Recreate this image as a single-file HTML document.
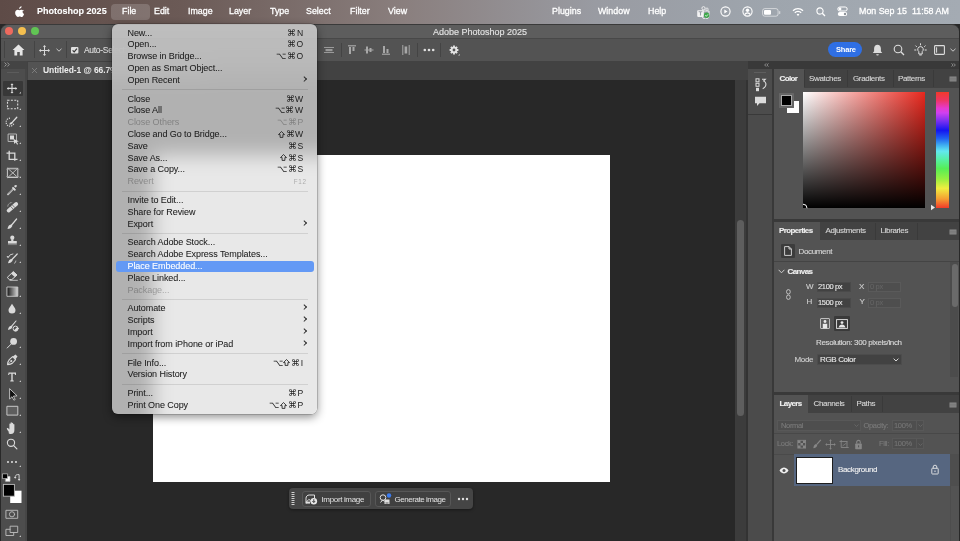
<!DOCTYPE html>
<html><head><meta charset="utf-8">
<style>
*{box-sizing:border-box;margin:0;padding:0}
html,body{width:960px;height:541px;overflow:hidden;background:#282828;font-family:"Liberation Sans",sans-serif;position:relative}
body{will-change:transform}
div,span,svg{position:absolute}
#menubar{left:0;top:0;width:960px;height:24px;background:linear-gradient(90deg,#5e4b47 0%,#6b5a56 19%,#8a7f7e 42%,#999ba2 62%,#9ea5ad 80%,#a4abb3 100%);color:#fff;font-size:10px}
#menubar span{top:6px;line-height:11px;font-size:9.2px;white-space:nowrap;transform-origin:0 0;transform:scaleX(.965);-webkit-text-stroke:.3px #fff}
#win{left:1px;top:24px;width:958px;height:517px;background:#282828;border-radius:7px 7px 0 0;overflow:hidden}
.pt{font-size:8px;letter-spacing:-.35px;color:#d6d6d6;white-space:nowrap;line-height:10px;-webkit-text-stroke:.12px currentColor}
.ptb{font-weight:bold;color:#efefef;letter-spacing:-.6px}
.tl{top:3px;width:8px;height:8px;border-radius:50%}
#menu{left:111.5px;top:24px;width:205.5px;height:390px;border-radius:6px;overflow:hidden;box-shadow:0 3px 10px rgba(0,0,0,.45),0 0 0 .5px rgba(0,0,0,.3)}
.mi{left:16px;font-size:9px;letter-spacing:-.07px;color:#202020;-webkit-text-stroke:.05px #202020;line-height:11.8px;white-space:nowrap}
.sc{right:13.2px;font-size:8.6px;color:#1c1c1c;line-height:11.8px;white-space:nowrap;letter-spacing:.6px}
.f12{font-size:6.3px;right:10.5px;line-height:12.5px}
.dis{color:rgba(0,0,0,.28);-webkit-text-stroke:0}
.sel{color:#fff;-webkit-text-stroke:.1px #fff}
.hl{left:4px;right:3px;height:11.6px;background:#6399f5;border-radius:3px}
.sep{left:10px;right:9px;height:1px;background:rgba(0,0,0,.1)}
.arr{right:11px;width:4.4px;height:4.4px;border-right:1.4px solid #2a2a2a;border-top:1.4px solid #2a2a2a;transform:translateY(2.1px) rotate(45deg)}
.ico{stroke:#d0d0d0;fill:none;stroke-width:1.2}
</style></head><body>
<div id="menubar">
 <svg style="left:15px;top:6px" width="9.6" height="11" viewBox="0 0 11 13"><path fill="#fff" d="M7.6 0.2c.1.9-.3 1.7-.8 2.3-.5.6-1.3 1-2 .9-.1-.8.3-1.7.8-2.2.5-.6 1.3-1 2-1zM10.2 4.4c-.1.1-1.4.8-1.4 2.5 0 2 1.7 2.6 1.8 2.6 0 .1-.3 1-.9 1.9-.6.8-1.2 1.6-2.1 1.6-.9 0-1.2-.6-2.2-.6-1.1 0-1.4.6-2.2.6-.9 0-1.5-.8-2.1-1.7C.3 10.2-.3 8.5.2 6.9.5 5.7 1.5 4.5 2.9 4.5c.9 0 1.6.6 2.2.6.5 0 1.3-.7 2.3-.6.4 0 1.7.1 2.8 1.4z"/></svg>
 <span style="left:37px;font-weight:bold;font-size:9.6px;top:5.2px;transform:scaleX(.94);-webkit-text-stroke:.1px #fff">Photoshop 2025</span>
 <div style="left:111px;top:4px;width:39px;height:15.5px;border-radius:4px;background:rgba(255,255,255,.17)"></div>
 <span style="left:122px">File</span>
 <span style="left:154px">Edit</span>
 <span style="left:187.5px">Image</span>
 <span style="left:229px">Layer</span>
 <span style="left:269.5px">Type</span>
 <span style="left:306px">Select</span>
 <span style="left:349.5px">Filter</span>
 <span style="left:387.5px">View</span>
 <span style="left:551.5px">Plugins</span>
 <span style="left:598px">Window</span>
 <span style="left:647.5px">Help</span>
 <span style="left:858.5px">Mon Sep 15</span>
 <span style="left:911.5px">11:58 AM</span>
 <svg style="left:696px;top:6px" width="15" height="13" viewBox="0 0 15 13"><circle cx="7.5" cy="2.2" r="1.6" fill="none" stroke="#f2f2f2" stroke-width=".9"/><circle cx="11" cy="3.2" r="1.2" fill="none" stroke="#f2f2f2" stroke-width=".8"/><path d="M6 5h7v4.5a3.5 3.5 0 0 1-7 0z" fill="none" stroke="#f2f2f2" stroke-width=".9"/><rect x="1.2" y="4.3" width="6.6" height="6.6" rx=".8" fill="#f4f4f4"/><path d="M2.6 5.8h3.8M4.5 5.8v3.8" stroke="#9aa0a8" stroke-width="1.1"/><circle cx="10.6" cy="9.3" r="2.7" fill="#3ea84a"/><path d="M9.3 9.3l1 1 1.7-1.9" stroke="#fff" stroke-width=".8" fill="none"/></svg>
 <svg style="left:720px;top:6px" width="11" height="11" viewBox="0 0 11 11"><circle cx="5.5" cy="5.5" r="4.6" stroke="#fff" stroke-width="1.1" fill="none"/><path d="M4.3 3.5 L7.5 5.5 L4.3 7.5Z" fill="#fff"/></svg>
 <svg style="left:742px;top:6px" width="11" height="11" viewBox="0 0 11 11"><circle cx="5.5" cy="5.5" r="4.6" stroke="#fff" stroke-width="1.1" fill="none"/><circle cx="5.5" cy="4.3" r="1.7" fill="#fff"/><path d="M2.6 8.6c.8-1.3 1.8-1.8 2.9-1.8s2.1.5 2.9 1.8" stroke="#fff" stroke-width="1.2" fill="none"/></svg>
 <svg style="left:762px;top:8px" width="19" height="9" viewBox="0 0 19 9"><rect x=".6" y=".6" width="15.5" height="7.6" rx="2.2" stroke="rgba(255,255,255,.55)" stroke-width="1" fill="none"/><rect x="2" y="2" width="7" height="4.8" rx="1" fill="#fff"/><rect x="17" y="3" width="1.3" height="3" rx=".6" fill="rgba(255,255,255,.5)"/></svg>
 <svg style="left:792px;top:7px" width="12" height="10" viewBox="0 0 12 10"><path d="M1 3.8A7 7 0 0 1 11 3.8" stroke="#fff" stroke-width="1.3" fill="none"/><path d="M2.8 5.7A4.4 4.4 0 0 1 9.2 5.7" stroke="#fff" stroke-width="1.3" fill="none"/><path d="M4.6 7.6A1.9 1.9 0 0 1 7.4 7.6L6 9Z" fill="#fff"/></svg>
 <svg style="left:816px;top:7px" width="10" height="10" viewBox="0 0 10 10"><circle cx="4" cy="4" r="3.1" stroke="#fff" stroke-width="1.1" fill="none"/><path d="M6.3 6.3L9 9" stroke="#fff" stroke-width="1.3"/></svg>
 <svg style="left:837px;top:6px" width="11" height="11" viewBox="0 0 11 11"><rect x=".8" y="1" width="9.4" height="4" rx="2" stroke="#fff" stroke-width="1" fill="none"/><circle cx="3" cy="3" r="1.4" fill="#fff"/><rect x=".8" y="6" width="9.4" height="4" rx="2" fill="#fff"/><circle cx="8" cy="8" r="1.2" fill="#8e9399"/></svg>
</div>
<div id="win"></div>
<div style="left:1px;top:23.5px;width:958px;height:14.5px;background:#5d5d5d;border-radius:7px 7px 0 0;border-top:.5px solid #3a3a3a"></div>
<div class="tl" style="left:5px;top:27px;background:#ed6a5e"></div>
<div class="tl" style="left:18px;top:27px;background:#f4bf4f"></div>
<div class="tl" style="left:31px;top:27px;background:#61c554"></div>
<div style="left:433px;top:27px;font-size:9px;line-height:11px;color:#e2e2e2;white-space:nowrap;-webkit-text-stroke:.15px #e2e2e2">Adobe Photoshop 2025</div>
<!-- options bar -->
<div style="left:1px;top:38px;width:958px;height:23px;background:#535353;border-top:1px solid #484848"></div>
<div style="left:4px;top:41px;width:1px;height:17px;background:#444"></div>
<div style="left:34px;top:41px;width:1px;height:17px;background:#444"></div>
<div style="left:66px;top:41px;width:1px;height:17px;background:#444"></div>
<svg style="left:12px;top:44px" width="13" height="12" viewBox="0 0 13 12"><path d="M6.5 .6 L12.4 6 L10.6 6 L10.6 11.4 L7.8 11.4 L7.8 8 L5.2 8 L5.2 11.4 L2.4 11.4 L2.4 6 L.6 6Z" fill="#e6e6e6"/></svg>
<svg style="left:39px;top:45px" width="11" height="11" viewBox="0 0 11 11"><path d="M5.5 1.3v8.4M1.3 5.5h8.4" stroke="#d8d8d8" stroke-width="1"/><path d="M5.5 .2l-1.5 1.6h3zM5.5 10.8l-1.5-1.6h3zM.2 5.5l1.6-1.5v3zM10.8 5.5l-1.6-1.5v3z" fill="#d8d8d8"/><circle cx="5.5" cy="1.4" r=".9" fill="#d8d8d8"/><circle cx="5.5" cy="9.6" r=".9" fill="#d8d8d8"/><circle cx="1.4" cy="5.5" r=".9" fill="#d8d8d8"/><circle cx="9.6" cy="5.5" r=".9" fill="#d8d8d8"/></svg>
<svg style="left:56px;top:48px" width="6" height="4" viewBox="0 0 6 4"><path d="M.5 .8L3 3.2 5.5 .8" stroke="#c8c8c8" stroke-width="1" fill="none"/></svg>
<svg style="left:71px;top:47px" width="8" height="7" viewBox="0 0 8 7"><rect x="0" y="0" width="7.4" height="6.6" rx="1" fill="#e0e0e0"/><path d="M1.6 3.3L3.2 4.9 5.9 1.7" stroke="#333" stroke-width="1.2" fill="none"/></svg>
<div class="pt" style="left:84px;top:44.5px;color:#dcdcdc;font-size:8.5px;letter-spacing:-.3px">Auto-Select:</div>
<!-- alignment icons right of menu -->
<svg style="left:323px;top:46px" width="12" height="8" viewBox="0 0 12 8"><path d="M1 1.5h10M1 6.5h10" stroke="#9a9a9a" stroke-width="1.2"/><rect x="2.5" y="3" width="7" height="2.2" fill="#9a9a9a"/></svg>
<div style="left:341px;top:43px;width:1px;height:14px;background:#444"></div>
<svg style="left:347px;top:45px" width="10" height="10" viewBox="0 0 10 10"><path d="M1 .8h8" stroke="#a8a8a8" stroke-width="1.2"/><rect x="2" y="2" width="2" height="7" fill="#a8a8a8"/><rect x="5.5" y="2" width="2" height="4" fill="#a8a8a8"/></svg>
<svg style="left:364px;top:45px" width="10" height="10" viewBox="0 0 10 10"><path d="M.5 5h9" stroke="#a8a8a8" stroke-width="1"/><rect x="2" y="1.5" width="2" height="7" fill="#a8a8a8"/><rect x="5.5" y="3" width="2" height="4" fill="#a8a8a8"/></svg>
<svg style="left:381px;top:45px" width="10" height="10" viewBox="0 0 10 10"><path d="M1 9.2h8" stroke="#a8a8a8" stroke-width="1.2"/><rect x="2" y="1" width="2" height="7" fill="#a8a8a8"/><rect x="5.5" y="4" width="2" height="4" fill="#a8a8a8"/></svg>
<svg style="left:401.5px;top:44px" width="8" height="12" viewBox="0 0 8 12"><path d="M.8 1v10M7.2 1v10" stroke="#a8a8a8" stroke-width="1"/><rect x="2.6" y="2.5" width="2.6" height="7" fill="#a8a8a8"/></svg>
<div style="left:417px;top:43px;width:1px;height:14px;background:#444"></div>
<svg style="left:423px;top:48px" width="12" height="4" viewBox="0 0 12 4"><circle cx="1.8" cy="2" r="1.3" fill="#e0e0e0"/><circle cx="6" cy="2" r="1.3" fill="#e0e0e0"/><circle cx="10.2" cy="2" r="1.3" fill="#e0e0e0"/></svg>
<div style="left:440px;top:43px;width:1px;height:14px;background:#444"></div>
<svg style="left:448.2px;top:43.8px" width="14" height="14" viewBox="0 0 14 14"><path d="M9.28 5.09L10.40 5.04L10.40 6.96L9.28 6.91L9.14 7.30L8.96 7.68L9.79 8.43L8.43 9.79L7.68 8.96L7.30 9.14L6.91 9.28L6.96 10.40L5.04 10.40L5.09 9.28L4.70 9.14L4.32 8.96L3.57 9.79L2.21 8.43L3.04 7.68L2.86 7.30L2.72 6.91L1.60 6.96L1.60 5.04L2.72 5.09L2.86 4.70L3.04 4.32L2.21 3.57L3.57 2.21L4.32 3.04L4.70 2.86L5.09 2.72L5.04 1.60L6.96 1.60L6.91 2.72L7.30 2.86L7.68 3.04L8.43 2.21L9.79 3.57L8.96 4.32L9.14 4.70Z M7.4 6a1.4 1.4 0 1 0 -2.8 0a1.4 1.4 0 1 0 2.8 0Z" fill="#e2e2e2" fill-rule="evenodd"/><path d="M10 11.6h1.8v-1.6z" fill="#cfcfcf"/></svg>
<!-- right of options bar -->
<div style="left:828px;top:42px;width:34px;height:15px;border-radius:8px;background:#2f6fe4"></div>
<div style="left:836px;top:45px;font-size:7.5px;font-weight:bold;color:#fff;line-height:9px;letter-spacing:-.2px">Share</div>
<svg style="left:872px;top:44px" width="11" height="12" viewBox="0 0 11 12"><path d="M5.5 .8c-2 0-3.4 1.5-3.4 3.6v2.8L.8 9h9.4L8.9 7.2V4.4C8.9 2.3 7.5.8 5.5.8z" fill="#dcdcdc"/><path d="M4.2 10.2a1.3 1.3 0 0 0 2.6 0z" fill="#dcdcdc"/></svg>
<svg style="left:893px;top:44px" width="12" height="12" viewBox="0 0 12 12"><circle cx="5" cy="5" r="3.8" stroke="#dedede" stroke-width="1.1" fill="none"/><path d="M7.8 7.8l3.2 3.2" stroke="#dedede" stroke-width="1.3"/></svg>
<svg style="left:914px;top:43px" width="13" height="13" viewBox="0 0 13 13"><path d="M6.5 .3v2M1.5 2.6l1.3 1.3M11.5 2.6l-1.3 1.3M.3 7h2M10.7 7h2" stroke="#dedede" stroke-width="1"/><path d="M6.5 3.6a2.8 2.8 0 0 0-1.7 5v2.4h3.4V8.6a2.8 2.8 0 0 0-1.7-5z" stroke="#dedede" stroke-width="1" fill="none"/><path d="M5 11.5h3l-.5 1h-2z" fill="#dedede"/></svg>
<svg style="left:934px;top:45px" width="11" height="10" viewBox="0 0 11 10"><rect x=".6" y=".6" width="9.8" height="8.8" rx=".8" stroke="#dedede" stroke-width="1.1" fill="none"/><path d="M2.6 2.3v5.4" stroke="#dedede" stroke-width="1"/></svg>
<svg style="left:950px;top:48px" width="6" height="4" viewBox="0 0 6 4"><path d="M.5 .8L3 3.2 5.5 .8" stroke="#c8c8c8" stroke-width="1" fill="none"/></svg>
<!-- tab row -->
<div style="left:1px;top:61px;width:747px;height:19px;background:#424242"></div>
<div style="left:28px;top:62px;width:180px;height:18px;background:#535353"></div>
<svg style="left:31px;top:67px" width="7" height="7" viewBox="0 0 7 7"><path d="M1 1l5 5M6 1L1 6" stroke="#8c8c8c" stroke-width=".7"/></svg>
<div style="left:43px;top:65px;font-size:8.5px;font-weight:bold;color:#ececec;line-height:10px;white-space:nowrap;letter-spacing:-.1px">Untitled-1 @ 66.7% (RGB/8)</div>
<!-- tools panel -->
<div style="left:1px;top:61px;width:26.2px;height:480px;background:#464646"></div>
<div style="left:1px;top:61px;width:26.2px;height:8px;background:#444"></div><div style="left:1px;top:69px;width:24.1px;height:472px;background:#4d4d4d"></div>
<svg style="left:4px;top:62px" width="6" height="5" viewBox="0 0 6 5"><path d="M.6 .5L2.4 2.5.6 4.5M3.4 .5L5.2 2.5 3.4 4.5" stroke="#aaa" stroke-width=".8" fill="none"/></svg>
<div style="left:7px;top:72px;width:12px;height:1.2px;background:#5c5c5c"></div>
<div style="left:3px;top:80.5px;width:19.5px;height:15px;background:#383838;border-radius:1px"></div>
<svg style="left:0;top:0" width="27" height="541" viewBox="0 0 27 541">
<defs><linearGradient id="tg" x1="0" x2="1"><stop offset="0" stop-color="#1a1a1a"/><stop offset="1" stop-color="#d8d8d8"/></linearGradient></defs>
<g fill="#dadada" stroke="#dadada" stroke-linecap="round">
<path d="M12 84.5v8M8 88.4h8" stroke-width="1.1" fill="none"/><path d="M12 83.2l-1.5 1.7h3zM12 93.6l-1.5-1.7h3zM6.8 88.4l1.7-1.5v3zM17.2 88.4l-1.7-1.5v3z" stroke="none"/>
<path d="M7.5 100.2h10.2v8.6H7.5z" fill="none" stroke-width="1.1" stroke-dasharray="2 1.4" stroke-linecap="butt"/>
<path d="M10 118.2a4 4 0 1 0 4 5" fill="none" stroke-width="1.2" stroke-dasharray="1.2 1" stroke-linecap="butt"/><path d="M16.8 117.2l-4.6 5.2" stroke-width="1.3"/><path d="M12.4 122c-1.6-.2-2.8.8-3.1 2.6 1.7.1 2.8-.5 3.4-1.7z" stroke="none"/>
<path d="M8.5 134h8v7.5h-8z" fill="none" stroke-width=".9" stroke="#bdbdbd"/><path d="M10 135.5h4v4h-4z" stroke="none"/><path d="M13.6 139l5.2 2.2-2.1.7 1.4 2.2-1 .6-1.3-2.2-1.6 1.5z" stroke="none"/>
<path d="M9.2 150.8v8.6h8.3M6.5 153.2h8.3v7.6" fill="none" stroke-width="1.3" stroke-linecap="butt"/>
<path d="M7.8 168.3h10v9.2h-10z" fill="none" stroke-width="1" stroke="#c8c8c8"/><path d="M7.8 168.3l10 9.2M17.8 168.3l-10 9.2" stroke-width=".9" stroke="#c8c8c8"/><path d="M6.5 169.3h12.5M6.5 176.5h12.5" stroke-width=".6" stroke="#9a9a9a"/>
<path d="M8 194.3l5.8-5.8" stroke-width="1.7"/><path d="M8.6 193.7l5-5" stroke="#4d4d4d" stroke-width=".6"/><path d="M13 186.8l3 3-1.2 1.2-3-3z" stroke="none"/><path d="M14.6 185.2l1.7-.3.5.5-.3 1.7-1.3.4-1-1z" stroke="none"/>
<path d="M8.6 210.6l7.6-6.6" stroke-width="3.8"/><path d="M10.6 206.4l2.3 2.4M12.4 205l2.3 2.4" stroke="#4d4d4d" stroke-width=".7"/><path d="M7.8 206.4a4 4 0 0 1 4.3-3.8" fill="none" stroke-width=".9" stroke-dasharray="1 .9" stroke-linecap="butt"/>
<path d="M16.6 219l-5 6" stroke-width="1.2"/><path d="M11.8 224.6c-2.3-.1-3.8 1.4-4.3 4.4 2.3-.1 3.9-1 4.8-3z" stroke="none"/>
<circle cx="12.3" cy="237.7" r="2.1" stroke="none"/><path d="M11.2 239.2h2.2v2h-2.2z" stroke="none"/><path d="M8 241h8.8v2.6H8z" stroke="none"/><path d="M8.3 244.6h8.2" stroke-width=".7" stroke="#9a9a9a"/>
<path d="M17.2 254l-5.3 5.5" stroke-width="1.2"/><path d="M12.2 259c-2.3-.1-3.7 1.4-4.2 4.3 2.3-.1 3.8-1 4.7-3z" stroke="none"/><path d="M8.3 257.3a5 5 0 0 1 4.6-3.4" fill="none" stroke-width=".9"/><path d="M6.5 256l2.3.3-.8 2z" stroke="none"/><path d="M15.8 261a4 4 0 0 1-1.4 2.4" fill="none" stroke-width=".8" stroke-dasharray="1 .8"/>
<path d="M7.5 277.2l5.8-5.6 3.7 3.4-5.2 4.6H9.8z" fill="none" stroke-width="1"/><path d="M13.3 271.6l3.7 3.4-2.2 2.1-3.7-3.4z" stroke="none"/><path d="M10 280.3h7.4" stroke-width=".8"/>
<path d="M7.3 287h10.5v9.3H7.3z" fill="url(#tg)" stroke-width=".9" stroke="#c8c8c8"/>
<path d="M12 303.8c-1 2-3.5 4.4-3.5 6.3a3.5 3.5 0 0 0 7 0c0-1.9-2.5-4.3-3.5-6.3z" stroke="none"/>
<path d="M16 321l-4.3 5.2" stroke-width="1.1"/><path d="M11.9 325.8c-2.2-.1-3.5 1.3-3.9 4.1 2.2-.1 3.6-.9 4.4-2.8z" stroke="none"/><circle cx="15.6" cy="328.6" r="2.5" fill="none" stroke-width="1"/><path d="M13.8 330.4l3.6-3.6A2.5 2.5 0 0 1 13.8 330.4z" stroke="none"/>
<circle cx="13.6" cy="341.4" r="3.4" stroke="none"/><path d="M11.2 344l-4 4" stroke-width="1"/>
<path d="M7.6 364.6c.1-2 .6-3.6 1.7-4.9l3.3-3 3 3-3 3.3c-1.3 1.1-2.9 1.6-5 1.6z" fill="none" stroke-width="1.1" stroke-linejoin="round"/><circle cx="11.3" cy="360.9" r="1" stroke="none"/><path d="M7.8 364.4l3-3" stroke-width=".7"/><path d="M12.8 356.4l2.7-1.9 2 2-1.9 2.7z" stroke="none"/>
<path d="M8.6 372.6h7.4v2.3h-.9l-.5-1.1h-1.9v6.4l1 .4v.9H10.3v-.9l1-.4v-6.4H9.5l-.5 1.1h-.9z" stroke="none"/>
<path d="M9.6 389v10l2.4-2.3 1.9 3.5 1.3-.7-1.8-3.4 3.3-.2z" fill="#111" stroke="#dadada" stroke-width=".8" stroke-linejoin="round"/>
<path d="M7.3 406.3h10.5v8.8H7.3z" fill="#5e5e5e" stroke-width="1" stroke="#c8c8c8"/>
<path d="M9.3 432.5c-1-1.4-2.1-2.8-2.4-3.6-.3-.8.6-1.3 1.3-.6l1.2 1.3v-5.6c0-.8 1.2-.8 1.2 0v3.8-5c0-.8 1.3-.8 1.3 0v4.9-4.3c0-.8 1.3-.8 1.3 0v4.4-3.2c0-.8 1.2-.8 1.2 0v5.5c0 2.5-1.2 4-3.5 4-1.2 0-2-.7-2.6-1.6z" stroke="none"/>
<circle cx="11" cy="442.8" r="3.6" fill="none" stroke-width="1.1"/><path d="M13.7 445.6l3.2 3.3" stroke-width="1.2"/>
<circle cx="8" cy="462" r="1.05" stroke="none"/><circle cx="12" cy="462" r="1.05" stroke="none"/><circle cx="16" cy="462" r="1.05" stroke="none"/>
<path d="M5.8 476.5h4.2v4.8H5.8z" fill="#fff" stroke="#c8c8c8" stroke-width=".7"/><path d="M2.8 473.8h4.8v4.8H2.8z" fill="#000" stroke="#c8c8c8" stroke-width=".7"/>
<path d="M15.2 477.3c0-1.8.9-2.7 2.6-2.7h1.3v4.3" fill="none" stroke-width=".9"/><path d="M13.9 477l1.3 1.8 1.3-1.8zM17.8 479l1.3 1.9 1.3-1.9z" stroke="none"/>
<path d="M6.3 510.3h11.4v8H6.3z" fill="none" stroke-width=".9" stroke="#c0c0c0"/><circle cx="12" cy="514.3" r="2.6" fill="none" stroke-width=".9" stroke="#c0c0c0"/>
<path d="M6.3 529.3h7.4v6.2H6.3z" fill="none" stroke-width=".9" stroke="#c0c0c0"/><path d="M10.5 526.2h7.2v6.3h-7.2z" fill="#4d4d4d" stroke-width=".9" stroke="#c0c0c0"/>
</g>
<g fill="#c8c8c8"><path d="M21 91.7v1.8h-1.8z"/><path d="M21 108.2v1.8h-1.8z"/><path d="M21 125.2v1.8h-1.8z"/><path d="M21 142.2v1.8h-1.8z"/><path d="M21 159.2v1.8h-1.8z"/><path d="M21 176.2v1.8h-1.8z"/><path d="M21 193.2v1.8h-1.8z"/><path d="M21 210.2v1.8h-1.8z"/><path d="M21 227.2v1.8h-1.8z"/><path d="M21 244.2v1.8h-1.8z"/><path d="M21 261.2v1.8h-1.8z"/><path d="M21 278.2v1.8h-1.8z"/><path d="M21 295.2v1.8h-1.8z"/><path d="M21 312.2v1.8h-1.8z"/><path d="M21 346.2v1.8h-1.8z"/><path d="M21 363.2v1.8h-1.8z"/><path d="M21 380.2v1.8h-1.8z"/><path d="M21 397.2v1.8h-1.8z"/><path d="M21 414.2v1.8h-1.8z"/><path d="M21 431.2v1.8h-1.8z"/><path d="M21 465.2v1.8h-1.8z"/><path d="M21 535.2v1.8h-1.8z"/></g>
<rect x="10.2" y="490.7" width="11.3" height="12.3" fill="#fff"/>
<rect x="3.4" y="484.4" width="11" height="11.8" fill="#000" stroke="#bdbdbd" stroke-width=".9"/>
</svg>
<!-- doc -->
<div style="left:153px;top:155px;width:457px;height:327px;background:#fff"></div>
<!-- contextual taskbar -->
<div style="left:289px;top:488px;width:184px;height:21px;background:#454545;border-radius:4px;box-shadow:0 1px 3px rgba(0,0,0,.4)"></div>
<svg style="left:291px;top:491px" width="4" height="15" viewBox="0 0 4 15"><g stroke="#cfcfcf" stroke-width="1"><path d="M.5 1.5h3M.5 3.5h3M.5 5.5h3M.5 7.5h3M.5 9.5h3M.5 11.5h3M.5 13.5h3"/></g></svg>
<div style="left:302px;top:491px;width:69px;height:16px;border:1px solid #575757;border-radius:3px;background:#404040"></div>
<svg style="left:305px;top:493.5px" width="13" height="11" viewBox="0 0 13 11"><path d="M1 9.5V4.2C1 2.4 2.4 1 4.2 1h5.3v3" fill="none" stroke="#e0e0e0" stroke-width="1"/><path d="M1.3 8.2l2.6-2.9 2 1.8 1.6-1.5" fill="none" stroke="#e0e0e0" stroke-width="1"/><rect x="1" y="7.6" width="4" height="2" fill="#e0e0e0"/><circle cx="8.8" cy="7.2" r="3.3" fill="#e8e8e8"/><path d="M8.8 5.2v3.2M7.4 7l1.4 1.5L10.2 7" stroke="#404040" stroke-width="1" fill="none"/></svg>
<div class="pt" style="left:321.5px;top:494.8px;color:#e2e2e2;letter-spacing:-.35px;-webkit-text-stroke:0">Import image</div>
<div style="left:375px;top:491px;width:76px;height:16px;border:1px solid #575757;border-radius:3px;background:#404040"></div>
<svg style="left:378.5px;top:493px" width="13" height="12" viewBox="0 0 13 12"><circle cx="4" cy="4.6" r="2.8" fill="none" stroke="#e0e0e0" stroke-width="1"/><path d="M1.5 9.5l2.2-2.6 1.8 1.6" fill="none" stroke="#e0e0e0" stroke-width="1"/><rect x="5.5" y="6.5" width="5" height="4.5" fill="#e0e0e0"/><path d="M6.5 10h3" stroke="#404040" stroke-width=".8"/><circle cx="10" cy="2.5" r="2.2" fill="#3b7cf0"/></svg>
<div class="pt" style="left:394.5px;top:494.8px;color:#e2e2e2;letter-spacing:-.45px;-webkit-text-stroke:0">Generate image</div>
<svg style="left:457px;top:497px" width="12" height="4" viewBox="0 0 12 4"><circle cx="2" cy="2" r="1.2" fill="#e0e0e0"/><circle cx="6" cy="2" r="1.2" fill="#e0e0e0"/><circle cx="10" cy="2" r="1.2" fill="#e0e0e0"/></svg>
<!-- scrollbar column -->
<div style="left:735px;top:80px;width:11px;height:461px;background:#3c3c3c"></div>
<div style="left:737px;top:220px;width:7px;height:196px;border-radius:3.5px;background:#5e5e5e"></div>
<div style="left:746.3px;top:80px;width:1.5px;height:461px;background:#333"></div>
<!-- right dock top strip -->
<div style="left:748px;top:61px;width:211px;height:8px;background:#393939"></div>
<svg style="left:764px;top:62.5px" width="5" height="4" viewBox="0 0 5 4"><path d="M2.2 .4L.7 2l1.5 1.6M4.4 .4L2.9 2l1.5 1.6" stroke="#b0b0b0" stroke-width=".7" fill="none"/></svg>
<svg style="left:951px;top:62.5px" width="5" height="4" viewBox="0 0 5 4"><path d="M.6 .4L2.1 2 .6 3.6M2.8 .4L4.3 2 2.8 3.6" stroke="#b0b0b0" stroke-width=".7" fill="none"/></svg>
<!-- icon column -->
<div style="left:748px;top:69px;width:25px;height:472px;background:#393939"></div>
<div style="left:747.8px;top:69px;width:24.7px;height:44.5px;background:#4c4c4c"></div>
<div style="left:747.8px;top:114.5px;width:24.7px;height:427px;background:#4b4b4b"></div>
<div style="left:754px;top:72px;width:12px;height:1.2px;background:#5e5e5e"></div>
<svg style="left:754.5px;top:77.5px" width="13" height="14" viewBox="0 0 13 14"><g fill="none" stroke="#dcdcdc" stroke-width="1"><rect x="1" y=".8" width="3" height="3"/><rect x="1" y="5.3" width="3" height="3"/></g><rect x="1" y="9.8" width="3" height="3.4" fill="#dcdcdc"/><path d="M7 1.3h3.3l-1.6 1.6c2.3 1 2.8 3.8 1.6 5.6-.6 1-1.8 1.8-2.6 2.2" stroke="#dcdcdc" stroke-width="1.1" fill="none"/></svg>
<svg style="left:754px;top:96px" width="13" height="11" viewBox="0 0 13 11"><path d="M1 .8h11v6.4H5.5L3 10V7.2H1z" fill="#dcdcdc"/></svg>
<!-- right panels background -->
<div style="left:772.5px;top:69px;width:186.5px;height:472px;background:#393939"></div>
<!-- COLOR panel -->
<div style="left:774px;top:69px;width:185px;height:18.5px;background:#424242"></div>
<div style="left:774px;top:87.5px;width:185px;height:131.5px;background:#535353"></div>
<div style="left:774px;top:69px;width:30px;height:18.5px;background:#535353"></div>
<div style="left:804px;top:70px;width:1px;height:17px;background:#3a3a3a"></div>
<div style="left:847px;top:70px;width:1px;height:17px;background:#3a3a3a"></div>
<div style="left:892.5px;top:70px;width:1px;height:17px;background:#3a3a3a"></div>
<div style="left:932.5px;top:70px;width:1px;height:17px;background:#3a3a3a"></div>
<div class="pt ptb" style="left:779.5px;top:73.7px">Color</div>
<div class="pt" style="left:809px;top:73.7px">Swatches</div>
<div class="pt" style="left:853px;top:73.7px">Gradients</div>
<div class="pt" style="left:898px;top:73.7px">Patterns</div>
<svg style="left:948px;top:75px" width="9" height="7" viewBox="0 0 9 7"><rect x="1.5" y="1.5" width="7" height="5" fill="#8a8a8a"/><path d="M1.5 3.2h7M1.5 4.9h7" stroke="#6a6a6a" stroke-width=".6"/></svg>
<div style="left:786.8px;top:100.8px;width:12.2px;height:12.2px;background:#fff"></div>
<div style="left:779px;top:93px;width:14.7px;height:14.7px;background:#666;border-radius:.5px"></div><div style="left:780.8px;top:95px;width:11px;height:10.6px;background:#000;border:.7px solid #a8a8a8"></div>
<div style="left:803px;top:92px;width:122px;height:116px;background:linear-gradient(to bottom,rgba(0,0,0,0),#000),linear-gradient(to right,#fff,#e8281e)"></div>
<svg style="left:800px;top:203px" width="8" height="8" viewBox="0 0 8 8"><path d="M3 1.2a4 4 0 0 1 4 4" stroke="#fff" stroke-width="1" fill="none"/></svg>
<div style="left:936px;top:92px;width:13px;height:116px;background:linear-gradient(to bottom,#f23a2a 0%,#ee3562 7%,#e63ad0 14%,#d040f0 18%,#7a30f0 25%,#1414f0 33%,#2060f0 40%,#40b0f0 46%,#62e8f0 51%,#56f0a8 58%,#56ee56 66%,#98f040 75%,#f0ee40 83%,#f5a032 92%,#f23a2a 100%)"></div>
<svg style="left:930px;top:203.5px" width="6" height="7" viewBox="0 0 6 7"><path d="M1 .8L5 3.5 1 6.2z" fill="#e8e8e8"/></svg>
<!-- PROPERTIES panel -->
<div style="left:774px;top:222px;width:185px;height:18px;background:#424242"></div>
<div style="left:774px;top:240px;width:185px;height:152px;background:#535353"></div>
<div style="left:774px;top:222px;width:46px;height:18px;background:#535353"></div>
<div style="left:874.5px;top:223px;width:1px;height:17px;background:#3a3a3a"></div>
<div style="left:916.5px;top:223px;width:1px;height:17px;background:#3a3a3a"></div>
<div class="pt ptb" style="left:779px;top:225.5px">Properties</div>
<div class="pt" style="left:825.5px;top:225.5px">Adjustments</div>
<div class="pt" style="left:880.5px;top:225.5px">Libraries</div>
<svg style="left:948px;top:228px" width="9" height="7" viewBox="0 0 9 7"><rect x="1.5" y="1.5" width="7" height="5" fill="#8a8a8a"/><path d="M1.5 3.2h7M1.5 4.9h7" stroke="#6a6a6a" stroke-width=".6"/></svg>
<div style="left:781px;top:243.5px;width:14px;height:14px;background:#3c3c3c;border-radius:1px"></div>
<svg style="left:784px;top:245.5px" width="8" height="10" viewBox="0 0 8 10"><path d="M.6 .6h4.4l2.4 2.4v6.4H.6z M5 .6v2.4h2.4" stroke="#dcdcdc" stroke-width=".9" fill="none"/></svg>
<div class="pt" style="left:798.5px;top:246.5px">Document</div>
<div style="left:774px;top:261px;width:185px;height:1px;background:#444"></div>
<svg style="left:778px;top:269px" width="7" height="5" viewBox="0 0 7 5"><path d="M.6 .8L3.5 3.8 6.4 .8" stroke="#cfcfcf" stroke-width="1" fill="none"/></svg>
<div class="pt ptb" style="left:787.5px;top:267px">Canvas</div>
<div class="pt" style="left:806px;top:281.5px;color:#cfcfcf">W</div>
<div style="left:816.5px;top:282px;width:34px;height:10px;background:#424242;border:.5px solid #4a4a4a"></div>
<div class="pt" style="left:818px;top:282px;color:#e8e8e8;font-size:7.5px">2100 px</div>
<div class="pt" style="left:859px;top:281.5px;color:#cfcfcf">X</div>
<div style="left:867.5px;top:282px;width:33.5px;height:10px;background:#4e4e4e;border:.5px solid #5a5a5a"></div>
<div class="pt" style="left:870px;top:282px;color:#646464;font-size:7.5px">0 px</div>
<div class="pt" style="left:806.5px;top:297px;color:#cfcfcf">H</div>
<div style="left:816.5px;top:298px;width:34px;height:10px;background:#424242;border:.5px solid #4a4a4a"></div>
<div class="pt" style="left:818px;top:297.5px;color:#e8e8e8;font-size:7.5px">1500 px</div>
<div class="pt" style="left:859.5px;top:297px;color:#cfcfcf">Y</div>
<div style="left:867.5px;top:298px;width:33.5px;height:10px;background:#4e4e4e;border:.5px solid #5a5a5a"></div>
<div class="pt" style="left:870px;top:297.5px;color:#646464;font-size:7.5px">0 px</div>
<svg style="left:786px;top:289px" width="5" height="11" viewBox="0 0 5 11"><g fill="none" stroke="#cfcfcf" stroke-width=".9"><rect x=".6" y=".6" width="3.6" height="4.4" rx="1.8"/><rect x=".6" y="6" width="3.6" height="4.4" rx="1.8"/></g></svg>
<div style="left:819.5px;top:318px;width:10.5px;height:11px;border:.8px solid #bdbdbd;background:#5a5a5a;border-radius:1px"></div>
<svg style="left:821px;top:319px" width="8" height="10" viewBox="0 0 8 10"><circle cx="4" cy="2.5" r="1.4" fill="#e8e8e8"/><path d="M1.8 4.8h4.4v4.6H1.8z" fill="#e8e8e8"/></svg>
<div style="left:834px;top:316px;width:16px;height:15px;background:#3a3a3a;border-radius:1px"></div>
<svg style="left:836px;top:318.5px" width="12" height="10" viewBox="0 0 12 10"><rect x=".6" y=".6" width="10.8" height="8.8" fill="none" stroke="#e8e8e8" stroke-width=".9"/><circle cx="6" cy="3.6" r="1.4" fill="#e8e8e8"/><path d="M2.5 8.5c.6-2 1.8-3 3.5-3s2.9 1 3.5 3z" fill="#e8e8e8"/></svg>
<div class="pt" style="left:816px;top:337.5px;color:#dadada">Resolution: 300 pixels/inch</div>
<div class="pt" style="left:794.5px;top:354.5px;color:#cfcfcf">Mode</div>
<div style="left:816.5px;top:353.5px;width:85.5px;height:11.5px;background:#424242;border:.5px solid #4c4c4c;border-radius:1px"></div>
<div class="pt" style="left:820px;top:354.5px;color:#e8e8e8">RGB Color</div>
<svg style="left:893px;top:357.5px" width="6" height="4" viewBox="0 0 6 4"><path d="M.6 .6L3 3 5.4 .6" stroke="#d8d8d8" stroke-width="1" fill="none"/></svg>
<div style="left:950px;top:262px;width:8px;height:115px;background:#4c4c4c"></div>
<div style="left:951.5px;top:264px;width:6.5px;height:42.5px;border-radius:3px;background:#6a6a6a"></div>
<!-- LAYERS panel -->
<div style="left:774px;top:395px;width:185px;height:17.5px;background:#424242"></div>
<div style="left:774px;top:412.5px;width:185px;height:128.5px;background:#535353"></div>
<div style="left:774px;top:395px;width:34px;height:17.5px;background:#535353"></div>
<div style="left:850.5px;top:396px;width:1px;height:16px;background:#3a3a3a"></div>
<div style="left:881.5px;top:396px;width:1px;height:16px;background:#3a3a3a"></div>
<div class="pt ptb" style="left:779.5px;top:398.5px">Layers</div>
<div class="pt" style="left:813.5px;top:398.5px">Channels</div>
<div class="pt" style="left:856.5px;top:398.5px">Paths</div>
<svg style="left:948px;top:400.5px" width="9" height="7" viewBox="0 0 9 7"><rect x="1.5" y="1.5" width="7" height="5" fill="#8a8a8a"/><path d="M1.5 3.2h7M1.5 4.9h7" stroke="#6a6a6a" stroke-width=".6"/></svg>
<div style="left:777px;top:419.5px;width:84px;height:11px;background:#4e4e4e;border:.5px solid #585858"></div>
<div class="pt" style="left:781px;top:420.8px;color:#7a7a7a;font-size:7.5px">Normal</div>
<svg style="left:854px;top:424px" width="5" height="3" viewBox="0 0 5 3"><path d="M.5 .5L2.5 2.5 4.5 .5" stroke="#6a6a6a" stroke-width=".8" fill="none"/></svg>
<div class="pt" style="left:863.5px;top:420.8px;color:#7a7a7a;font-size:7.5px">Opacity:</div>
<div style="left:891.5px;top:419.5px;width:32.5px;height:11px;background:#4e4e4e;border:.5px solid #585858"></div>
<div style="left:915.5px;top:419.5px;width:1px;height:11px;background:#585858"></div>
<div class="pt" style="left:894px;top:420.8px;color:#757575;font-size:7.5px">100%</div>
<svg style="left:918px;top:424px" width="5" height="3" viewBox="0 0 5 3"><path d="M.5 .5L2.5 2.5 4.5 .5" stroke="#6a6a6a" stroke-width=".8" fill="none"/></svg>
<div style="left:774px;top:433px;width:185px;height:1px;background:#484848"></div>
<div class="pt" style="left:777px;top:439px;color:#7a7a7a;font-size:7.5px">Lock:</div>
<svg style="left:797px;top:438.5px" width="70" height="11" viewBox="0 0 70 11"><g fill="#878787" stroke="#878787">
<rect x=".8" y="1.3" width="7.8" height="7.8" fill="none" stroke-width=".8"/><rect x="1" y="1.5" width="2.5" height="2.5" stroke="none"/><rect x="6" y="1.5" width="2.5" height="2.5" stroke="none"/><rect x="3.5" y="4" width="2.5" height="2.5" stroke="none"/><rect x="1" y="6.5" width="2.5" height="2.5" stroke="none"/><rect x="6" y="6.5" width="2.5" height="2.5" stroke="none"/>
<path d="M23.8 .8l-4 4.6" stroke-width="1.2"/><path d="M19.6 5c-1.8 0-2.9 1.3-3.3 4.2 1.9-.2 3.2-.9 3.9-2.7z" stroke="none"/>
<path d="M33.5 1v9M29 5.5h9" stroke-width=".9" fill="none"/><path d="M33.5.3l-1.4 1.5h2.8zM33.5 10.7l-1.4-1.5h2.8zM28.3 5.5l1.5-1.4v2.8zM38.7 5.5l-1.5-1.4v2.8z" stroke="none"/>
<path d="M42.5 2.5h8M44.2 1v7.5h7.5M50 2.5v6" stroke-width=".9" fill="none"/><path d="M45.5 7l4-3" stroke-width=".7"/>
<rect x="58.2" y="4.6" width="6.6" height="5.6" rx=".6" stroke="none"/><path d="M59.7 4.6V3.2a1.8 1.8 0 0 1 3.6 0v1.4" fill="none" stroke-width="1.1"/><rect x="61.1" y="6.3" width="1" height="2" fill="#535353" stroke="none"/>
</g></svg>
<div class="pt" style="left:879px;top:439px;color:#7a7a7a;font-size:7.5px">Fill:</div>
<div style="left:891.5px;top:438px;width:32.5px;height:11px;background:#4e4e4e;border:.5px solid #585858"></div>
<div style="left:915.5px;top:438px;width:1px;height:11px;background:#585858"></div>
<div class="pt" style="left:894px;top:439.3px;color:#757575;font-size:7.5px">100%</div>
<svg style="left:918px;top:442.5px" width="5" height="3" viewBox="0 0 5 3"><path d="M.5 .5L2.5 2.5 4.5 .5" stroke="#6a6a6a" stroke-width=".8" fill="none"/></svg>
<div style="left:774px;top:453.5px;width:185px;height:1px;background:#4a4a4a"></div>
<div style="left:794px;top:454px;width:155.5px;height:32px;background:#566680"></div>
<div style="left:949.5px;top:454px;width:9.5px;height:32px;background:#4e4e4e"></div><div style="left:949.5px;top:486px;width:1px;height:55px;background:#4d4d4d"></div>
<svg style="left:779px;top:466.5px" width="10" height="7" viewBox="0 0 10 7"><path d="M.5 3.5C2 1.2 3.5.5 5 .5s3 .7 4.5 3C8 5.8 6.5 6.5 5 6.5S2 5.8.5 3.5z" fill="#f0f0f0"/><circle cx="5" cy="3.5" r="1.5" fill="#535353"/></svg>
<div style="left:796px;top:456.5px;width:37px;height:27px;background:#fff;border:1px solid #1e1e1e"></div>
<div class="pt" style="left:838px;top:465px;color:#f0f0f0">Background</div>
<svg style="left:931px;top:464px" width="8" height="11" viewBox="0 0 8 11"><rect x=".8" y="4.3" width="6.4" height="5.7" rx=".6" fill="none" stroke="#e8e8e8" stroke-width=".9"/><path d="M2.2 4.3V3a1.8 1.8 0 0 1 3.6 0v1.3" fill="none" stroke="#e8e8e8" stroke-width=".9"/><rect x="3.5" y="6.5" width="1" height="1.5" fill="#e8e8e8"/></svg>
<!-- FILE MENU -->
<div id="menu">
 <div style="left:-111.5px;top:-24px;width:960px;height:541px;filter:blur(10px)">
  <div style="left:0;top:38px;width:960px;height:23px;background:#4f4f4f"></div>
  <div style="left:0;top:61px;width:960px;height:19px;background:#404040"></div>
  <div style="left:27px;top:61px;width:180px;height:19px;background:#4b4b4b"></div>
  <div style="left:0;top:80px;width:960px;height:461px;background:#282828"></div>
  <div style="left:0;top:61px;width:26px;height:480px;background:#4a4a4a"></div>
  <div style="left:153px;top:155px;width:457px;height:327px;background:#fff"></div>
 </div>
 <div style="left:0;top:0;width:205.5px;height:391px;background:rgba(224,224,224,.745)"></div>
<div class="mi" style="top:3.6px">New...</div>
<div class="sc" style="top:3.6px">⌘N</div>
<div class="mi" style="top:15.4px">Open...</div>
<div class="sc" style="top:15.4px">⌘O</div>
<div class="mi" style="top:27.2px">Browse in Bridge...</div>
<div class="sc" style="top:27.2px">⌥⌘O</div>
<div class="mi" style="top:39.0px">Open as Smart Object...</div>
<div class="mi" style="top:50.8px">Open Recent</div>
<div class="arr" style="top:50.8px"></div>
<div class="sep" style="top:65.1px"></div>
<div class="mi" style="top:69.6px">Close</div>
<div class="sc" style="top:69.6px">⌘W</div>
<div class="mi" style="top:81.4px">Close All</div>
<div class="sc" style="top:81.4px">⌥⌘W</div>
<div class="mi dis" style="top:93.2px">Close Others</div>
<div class="sc dis" style="top:93.2px">⌥⌘P</div>
<div class="mi" style="top:105.0px">Close and Go to Bridge...</div>
<div class="sc" style="top:105.0px"><svg style="position:relative;display:inline-block;vertical-align:-.5px;margin-right:1px" width="7" height="7" viewBox="0 0 7 7"><path d="M3.5 .5L6.5 3.6H4.9V6.4H2.1V3.6H.5z" fill="none" stroke="#202020" stroke-width=".85" stroke-linejoin="round"/></svg>⌘W</div>
<div class="mi" style="top:116.8px">Save</div>
<div class="sc" style="top:116.8px">⌘S</div>
<div class="mi" style="top:128.6px">Save As...</div>
<div class="sc" style="top:128.6px"><svg style="position:relative;display:inline-block;vertical-align:-.5px;margin-right:1px" width="7" height="7" viewBox="0 0 7 7"><path d="M3.5 .5L6.5 3.6H4.9V6.4H2.1V3.6H.5z" fill="none" stroke="#202020" stroke-width=".85" stroke-linejoin="round"/></svg>⌘S</div>
<div class="mi" style="top:140.4px">Save a Copy...</div>
<div class="sc" style="top:140.4px">⌥⌘S</div>
<div class="mi dis" style="top:152.2px">Revert</div>
<div class="sc dis f12" style="top:152.2px">F12</div>
<div class="sep" style="top:166.5px"></div>
<div class="mi" style="top:171.0px">Invite to Edit...</div>
<div class="mi" style="top:182.8px">Share for Review</div>
<div class="mi" style="top:194.6px">Export</div>
<div class="arr" style="top:194.6px"></div>
<div class="sep" style="top:208.9px"></div>
<div class="mi" style="top:213.4px">Search Adobe Stock...</div>
<div class="mi" style="top:225.2px">Search Adobe Express Templates...</div>
<div class="hl" style="top:236.5px"></div>
<div class="mi sel" style="top:237.0px">Place Embedded...</div>
<div class="mi" style="top:248.8px">Place Linked...</div>
<div class="mi dis" style="top:260.6px">Package...</div>
<div class="sep" style="top:274.9px"></div>
<div class="mi" style="top:279.4px">Automate</div>
<div class="arr" style="top:279.4px"></div>
<div class="mi" style="top:291.2px">Scripts</div>
<div class="arr" style="top:291.2px"></div>
<div class="mi" style="top:303.0px">Import</div>
<div class="arr" style="top:303.0px"></div>
<div class="mi" style="top:314.8px">Import from iPhone or iPad</div>
<div class="arr" style="top:314.8px"></div>
<div class="sep" style="top:329.1px"></div>
<div class="mi" style="top:333.6px">File Info...</div>
<div class="sc" style="top:333.6px">⌥<svg style="position:relative;display:inline-block;vertical-align:-.5px;margin-right:1px" width="7" height="7" viewBox="0 0 7 7"><path d="M3.5 .5L6.5 3.6H4.9V6.4H2.1V3.6H.5z" fill="none" stroke="#202020" stroke-width=".85" stroke-linejoin="round"/></svg>⌘I</div>
<div class="mi" style="top:345.4px">Version History</div>
<div class="sep" style="top:359.7px"></div>
<div class="mi" style="top:364.2px">Print...</div>
<div class="sc" style="top:364.2px">⌘P</div>
<div class="mi" style="top:376.0px">Print One Copy</div>
<div class="sc" style="top:376.0px">⌥<svg style="position:relative;display:inline-block;vertical-align:-.5px;margin-right:1px" width="7" height="7" viewBox="0 0 7 7"><path d="M3.5 .5L6.5 3.6H4.9V6.4H2.1V3.6H.5z" fill="none" stroke="#202020" stroke-width=".85" stroke-linejoin="round"/></svg>⌘P</div>
</div>

</body></html>
